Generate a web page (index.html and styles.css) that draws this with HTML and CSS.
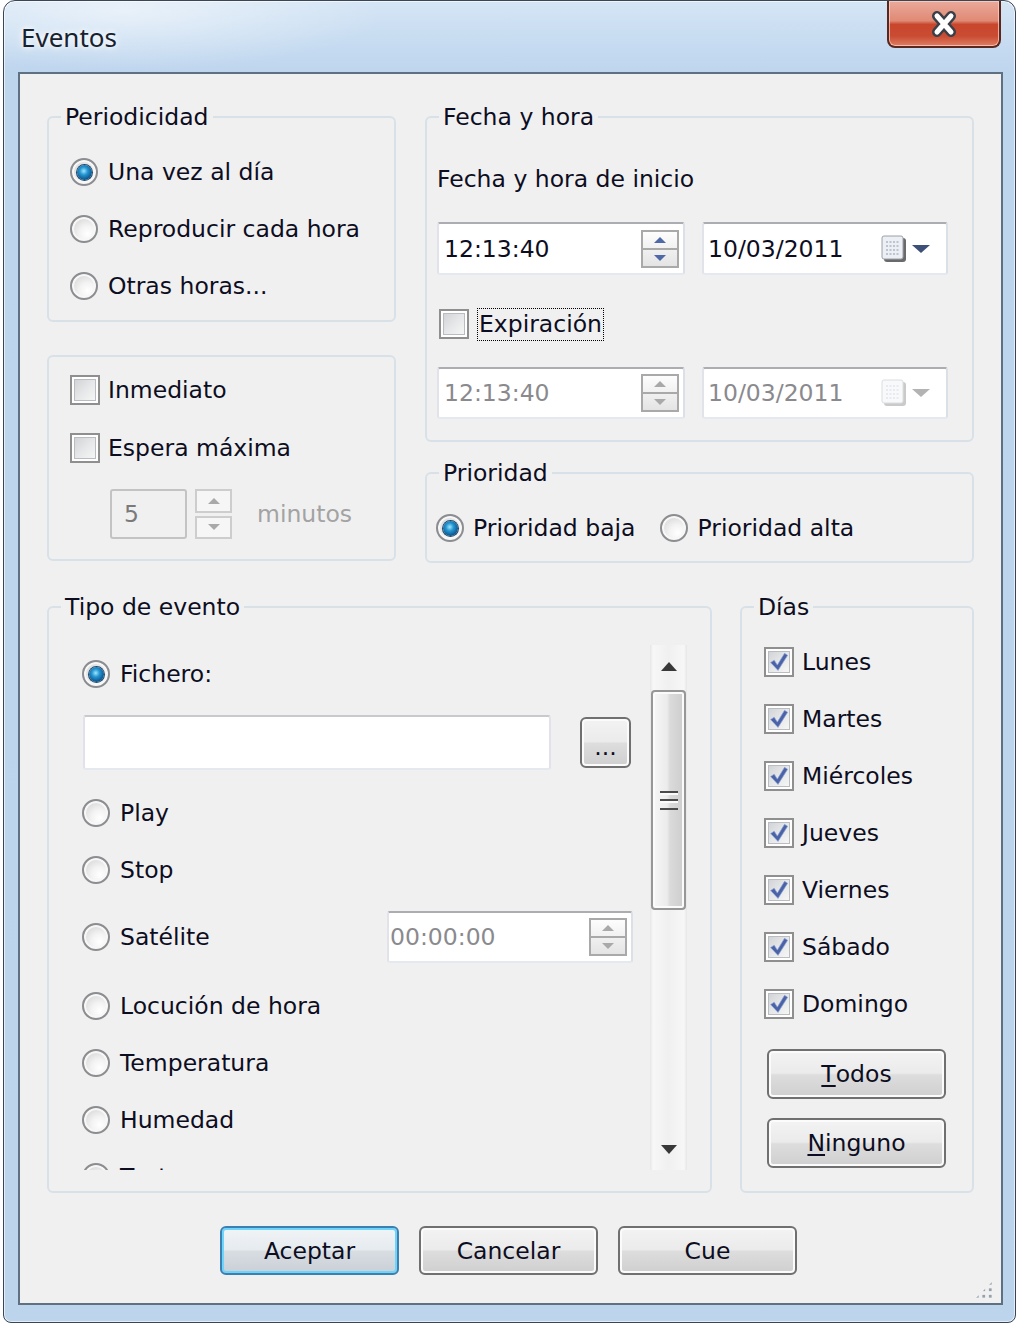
FILE: index.html
```html
<!DOCTYPE html>
<html lang="es">
<head>
  <meta charset="UTF-8">
  <title>Eventos</title>
  <link rel="stylesheet" href="styles.css">
</head>
<body>
  <div class="window">
    <div class="titlebar">
      <span class="title">Eventos</span>
      <span class="close">
        <svg width="36" height="26" viewBox="0 0 36 26">
          <path d="M11 5 L25 21 M25 5 L11 21" stroke="#3a3f48" stroke-width="10" stroke-linecap="round"/>
          <path d="M11 5 L25 21 M25 5 L11 21" stroke="#fff" stroke-width="5" stroke-linecap="round"/>
        </svg>
      </span>
    </div>

    <div class="client">
      <div class="top">
        <!-- columna izquierda -->
        <div class="col">
          <fieldset class="group g-period">
            <legend>Periodicidad</legend>
            <div class="stack">
              <label class="opt"><span class="radio on"></span>Una vez al día</label>
              <label class="opt"><span class="radio"></span>Reproducir cada hora</label>
              <label class="opt"><span class="radio"></span>Otras horas...</label>
            </div>
          </fieldset>

          <div class="group g-wait">
            <label class="opt chk"><span class="check"></span>Inmediato</label>
            <label class="opt chk wait2"><span class="check"></span>Espera máxima</label>
            <div class="wait-row">
              <span class="num">5</span>
              <span class="spin2"><i class="up"></i><i class="dn"></i></span>
              <span class="unit">minutos</span>
            </div>
          </div>
        </div>

        <!-- columna derecha -->
        <div class="col">
          <fieldset class="group g-date">
            <legend>Fecha y hora</legend>
            <div class="sub">Fecha y hora de inicio</div>
            <div class="fields">
              <div class="field time">
                <span class="val">12:13:40</span>
                <span class="spin"><i class="up"></i><i class="dn"></i></span>
              </div>
              <div class="field date">
                <span class="val">10/03/2011</span>
                <svg class="cal" width="26" height="28" viewBox="0 0 26 28">
                  <rect x="3" y="3" width="22" height="24" rx="3" fill="#6a6a6a"/>
                  <rect x="1" y="1" width="21" height="23" rx="2" fill="#eceff3" stroke="#9aa0a8"/>
                  <path d="M5 7h13M5 11h13M5 15h13M5 19h13" stroke="#bcc4cf" stroke-width="2" stroke-dasharray="2 1.5"/>
                </svg>
                <span class="drop"></span>
              </div>
            </div>
            <label class="opt chk expira"><span class="check"></span><span class="focus">Expiración</span></label>
            <div class="fields dis">
              <div class="field time">
                <span class="val">12:13:40</span>
                <span class="spin"><i class="up"></i><i class="dn"></i></span>
              </div>
              <div class="field date">
                <span class="val">10/03/2011</span>
                <svg class="cal" width="26" height="28" viewBox="0 0 26 28">
                  <rect x="3" y="3" width="22" height="24" rx="3" fill="#6a6a6a"/>
                  <rect x="1" y="1" width="21" height="23" rx="2" fill="#eceff3" stroke="#9aa0a8"/>
                  <path d="M5 7h13M5 11h13M5 15h13M5 19h13" stroke="#bcc4cf" stroke-width="2" stroke-dasharray="2 1.5"/>
                </svg>
                <span class="drop"></span>
              </div>
            </div>
          </fieldset>

          <fieldset class="group g-prio">
            <legend>Prioridad</legend>
            <div class="prio-row">
              <label class="opt"><span class="radio on"></span>Prioridad baja</label>
              <label class="opt"><span class="radio"></span>Prioridad alta</label>
            </div>
          </fieldset>
        </div>
      </div>

      <div class="bottom">
        <fieldset class="group g-type">
          <legend>Tipo de evento</legend>
          <div class="type-body">
            <div class="list">
              <label class="opt"><span class="radio on"></span>Fichero:</label>
              <div class="file-row">
                <span class="input"></span>
                <span class="btn dots">...</span>
              </div>
              <label class="opt"><span class="radio"></span>Play</label>
              <label class="opt"><span class="radio"></span>Stop</label>
              <div class="sat-row">
                <label class="opt"><span class="radio"></span>Satélite</label>
                <div class="field sat dis">
                  <span class="val">00:00:00</span>
                  <span class="spin"><i class="up"></i><i class="dn"></i></span>
                </div>
              </div>
              <label class="opt"><span class="radio"></span>Locución de hora</label>
              <label class="opt"><span class="radio"></span>Temperatura</label>
              <label class="opt"><span class="radio"></span>Humedad</label>
              <label class="opt"><span class="radio"></span>Texto a voz</label>
            </div>
            <div class="vscroll">
              <span class="sb-arrow up"></span>
              <span class="thumb"><i></i></span>
              <span class="track"></span>
              <span class="sb-arrow dn"></span>
            </div>
          </div>
        </fieldset>

        <fieldset class="group g-days">
          <legend>Días</legend>
          <div class="days">
            <label class="opt chk"><span class="check on"><svg viewBox="0 0 20 20"><path d="M3 10.5 L6 8.5 L8.6 12.6 L14.6 2.8 L17.2 4.4 L9.2 17 Z"/></svg></span>Lunes</label>
            <label class="opt chk"><span class="check on"><svg viewBox="0 0 20 20"><path d="M3 10.5 L6 8.5 L8.6 12.6 L14.6 2.8 L17.2 4.4 L9.2 17 Z"/></svg></span>Martes</label>
            <label class="opt chk"><span class="check on"><svg viewBox="0 0 20 20"><path d="M3 10.5 L6 8.5 L8.6 12.6 L14.6 2.8 L17.2 4.4 L9.2 17 Z"/></svg></span>Miércoles</label>
            <label class="opt chk"><span class="check on"><svg viewBox="0 0 20 20"><path d="M3 10.5 L6 8.5 L8.6 12.6 L14.6 2.8 L17.2 4.4 L9.2 17 Z"/></svg></span>Jueves</label>
            <label class="opt chk"><span class="check on"><svg viewBox="0 0 20 20"><path d="M3 10.5 L6 8.5 L8.6 12.6 L14.6 2.8 L17.2 4.4 L9.2 17 Z"/></svg></span>Viernes</label>
            <label class="opt chk"><span class="check on"><svg viewBox="0 0 20 20"><path d="M3 10.5 L6 8.5 L8.6 12.6 L14.6 2.8 L17.2 4.4 L9.2 17 Z"/></svg></span>Sábado</label>
            <label class="opt chk"><span class="check on"><svg viewBox="0 0 20 20"><path d="M3 10.5 L6 8.5 L8.6 12.6 L14.6 2.8 L17.2 4.4 L9.2 17 Z"/></svg></span>Domingo</label>
          </div>
          <span class="btn day-btn first"><u>T</u>odos</span>
          <span class="btn day-btn"><u>N</u>inguno</span>
        </fieldset>
      </div>

      <div class="actions">
        <span class="btn main default">Aceptar</span>
        <span class="btn main">Cancelar</span>
        <span class="btn main">Cue</span>
      </div>

      <span class="grip"></span>
    </div>
  </div>
</body>
</html>
```

FILE: styles.css
```css
*{
  margin: 0;
  padding: 0;
  box-sizing: border-box;
}
body{
  background: #fff;
  font-family: "DejaVu Sans", sans-serif;
  font-size: 23.5px;
  color: #0d0d22;
}

/* ventana */
.window{
  width: 1013px;
  margin-left: 3px;
  padding: 0 12px 17px 14px;
  border: 1px solid #3a4656;
  border-radius: 12px 12px 8px 8px;
  background:
    radial-gradient(ellipse 260px 60px at 120px 10px, rgba(255,255,255,.5), transparent),
    linear-gradient(180deg, #d5e5f5 0, #c7dcf1 40px, #bed5ee 72px, #bdd4ed 100%);
  box-shadow: inset 0 0 0 1px rgba(255,255,255,.6);
}
.titlebar{
  height: 71px;
  display: flex;
  justify-content: space-between;
  align-items: flex-start;
}
.title{
  margin: 21px 0 0 3px;
  font-family: "Noto Sans", sans-serif;
  font-size: 26px;
  line-height: 30px;
  color: #18222f;
  text-shadow: 0 0 10px #fff, 0 0 5px #fff;
}
.close{
  width: 114px;
  height: 47px;
  margin-right: 2px;
  display: flex;
  align-items: center;
  justify-content: center;
  border: 2px solid #5a271f;
  border-top: 0;
  border-radius: 0 0 8px 8px;
  background: linear-gradient(#eba99a 0%, #df8a75 44%, #c8462c 52%, #c94c32 78%, #de7d63 100%);
  box-shadow: inset 0 0 0 1px rgba(255,215,205,.7);
}

.client{
  position: relative;
  background: #f0f0f0;
  border: 2px solid #607083;
  padding: 30px 27px 28px;
}

/* rejilla principal */
.top{
  display: grid;
  grid-template-columns: 349px 1fr;
  column-gap: 29px;
  align-items: start;
}
.col{
  display: flex;
  flex-direction: column;
}
.bottom{
  display: grid;
  grid-template-columns: 665px 1fr;
  column-gap: 28px;
  margin-top: 31px;
}

/* group box */
.group{
  min-width: 0;
  border: 2px solid #d8e1e7;
  border-radius: 6px;
}
legend{
  margin-left: 12px;
  padding: 0 4px;
  line-height: 26px;
}
.stack{
  display: flex;
  flex-direction: column;
  gap: 29px;
}
.opt{
  display: flex;
  align-items: center;
  gap: 10px;
  height: 28px;
  white-space: nowrap;
}
.opt.chk{
  height: 30px;
  gap: 8px;
}

/* radio / check */
.radio{
  flex: none;
  width: 28px;
  height: 28px;
  border-radius: 50%;
  border: 2px solid #8b8d90;
  background: radial-gradient(circle at 65% 70%, #fff 0, #f3f3f3 35%, #d4d4d4 85%);
  box-shadow: inset 0 0 0 2px #f7f7f7;
  display: flex;
  align-items: center;
  justify-content: center;
}
.radio.on::after{
  content: "";
  width: 15px;
  height: 15px;
  border-radius: 50%;
  background: radial-gradient(circle at 45% 40%, #9fe6fb 0, #2596d2 32%, #0c558c 70%, #0a365f 100%);
  box-shadow: 0 0 0 1px #23466a;
}
.check{
  flex: none;
  width: 30px;
  height: 30px;
  border: 2px solid #8f8f8f;
  background: linear-gradient(135deg, #cbced2 0%, #e6e7e8 50%, #fafafa 100%);
  box-shadow: inset 0 0 0 2px #fff, inset 0 0 0 3px #b9bdc2;
  display: flex;
  align-items: center;
  justify-content: center;
}
.check svg{
  width: 24px;
  height: 24px;
}
.check svg path{
  fill: #4a62a6;
  stroke: #8fa3d6;
  stroke-width: .6;
}

/* Periodicidad */
.g-period{
  padding: 28px 0 20px 21px;
}
.g-period legend{
  margin-left: -9px;
}

/* espera */
.g-wait{
  margin-top: 33px;
  padding: 18px 0 20px 21px;
}
.wait2{
  margin-top: 28px;
}
.wait-row{
  display: flex;
  align-items: center;
  height: 50px;
  margin: 26px 0 0 40px;
}
.num{
  width: 77px;
  height: 50px;
  padding-left: 12px;
  line-height: 46px;
  color: #7a7a7a;
  border: 2px solid #c3c3c3;
  border-radius: 3px;
}
.spin2{
  width: 37px;
  height: 50px;
  margin-left: 8px;
  display: flex;
  flex-direction: column;
  gap: 3px;
}
.spin2 i{
  flex: 1;
  border: 2px solid #cdcdcd;
  background: #f6f6f6;
}
.unit{
  margin-left: 25px;
  color: #a3a3a3;
}

/* spin buttons */
.spin{
  flex: none;
  width: 38px;
  height: 38px;
  display: flex;
  flex-direction: column;
  border: 2px solid #a9a9a9;
  background: linear-gradient(#fdfdfd, #e4e4e4);
}
.spin i + i{
  border-top: 2px solid #a9a9a9;
}
.spin i, .spin2 i{
  flex: 1;
  display: flex;
  align-items: center;
  justify-content: center;
}
.spin i::before, .spin2 i::before{
  content: "";
  border-left: 6px solid transparent;
  border-right: 6px solid transparent;
  border-bottom: 6px solid #4e68a8;
}
.spin .dn::before, .spin2 .dn::before{
  border-bottom: 0;
  border-top: 6px solid #4e68a8;
}
.spin2 i::before{
  border-bottom-color: #a9a9a9;
}
.spin2 .dn::before{
  border-top-color: #a9a9a9;
}
.dis .spin i::before{
  border-bottom-color: #a9a9a9;
}
.dis .spin .dn::before{
  border-top-color: #a9a9a9;
}

/* fecha y hora */
.g-date{
  padding: 36px 0 21px 10px;
}
.g-date legend{
  margin-left: 2px;
}
.sub{
  line-height: 26px;
}
.fields{
  display: flex;
  gap: 17px;
  margin-top: 30px;
}
.fields.dis{
  margin-top: 28px;
}
.field{
  display: flex;
  align-items: center;
  height: 53px;
  background: #fff;
  border: 2px solid;
  border-color: #abadb3 #dbdfe6 #e3e9ef #e2e3ea;
  border-radius: 3px;
}
.dis .field, .field.dis{
  height: 52px;
}
.field .val{
  flex: 1;
}
.dis .val{
  color: #8a8a8e;
}
.field.time{
  width: 248px;
  padding: 0 4px 0 5px;
}
.field.date{
  width: 246px;
  padding: 0 16px 0 4px;
}
.cal{
  margin-right: 5px;
}
.drop{
  border-left: 9px solid transparent;
  border-right: 9px solid transparent;
  border-top: 8px solid #3d5077;
}
.dis .cal{
  opacity: .35;
}
.dis .drop{
  border-top-color: #b3b3b3;
}
.expira{
  margin: 34px 0 0 2px;
  gap: 5px;
}
.focus{
  border: 1px dotted #000;
  padding: 0 1px;
  line-height: 31px;
}

/* prioridad */
.g-prio{
  margin-top: 18px;
  padding: 28px 0 19px 9px;
}
.g-prio legend{
  margin-left: 3px;
}
.prio-row{
  display: flex;
  gap: 25px;
}
.prio-row .opt{
  gap: 9px;
}

/* tipo de evento */
.g-type{
  padding: 25px 23px 21px 0;
}
.type-body{
  display: flex;
  height: 525px;
}
.list{
  flex: 1;
  overflow: hidden;
  display: flex;
  flex-direction: column;
  gap: 29px;
  padding: 15px 0 0 33px;
}
.list .opt{
  flex: none;
}
.file-row{
  flex: none;
  display: flex;
  align-items: center;
  gap: 29px;
  margin: -2px 0 0 1px;
}
.input{
  width: 468px;
  height: 55px;
  background: #fff;
  border: 2px solid;
  border-color: #c7c9cf #e2e3ea #e3e9ef #e2e3ea;
  border-radius: 3px;
}
.sat-row{
  flex: none;
  display: flex;
  align-items: center;
  justify-content: space-between;
  padding-right: 17px;
  margin-top: -2px;
}
.field.sat{
  width: 246px;
  padding: 0 4px 0 1px;
}

/* barra de desplazamiento */
.vscroll{
  flex: none;
  width: 37px;
  display: flex;
  flex-direction: column;
  background: linear-gradient(90deg, #e6e6e6 0, #f7f7f7 3px, #f0f0f0 50%, #f7f7f7 calc(100% - 3px), #e6e6e6 100%);
}
.sb-arrow{
  height: 43px;
  display: flex;
  align-items: center;
  justify-content: center;
}
.sb-arrow.dn{
  height: 42px;
}
.sb-arrow::before{
  content: "";
  border-left: 8px solid transparent;
  border-right: 8px solid transparent;
  border-bottom: 9px solid #383838;
}
.sb-arrow.dn::before{
  border-bottom: 0;
  border-top: 9px solid #383838;
}
.thumb{
  height: 220px;
  margin: 2px 1px 0;
  border: 2px solid #979797;
  border-radius: 4px;
  background: linear-gradient(90deg, #f6f6f6 0%, #ececec 45%, #dadada 55%, #cdcdcd 100%);
  box-shadow: inset 0 0 0 2px #fbfbfb;
  display: flex;
  align-items: center;
  justify-content: center;
}
.thumb i{
  width: 18px;
  height: 19px;
  background: repeating-linear-gradient(#4a4a4a 0 2px, #fafafa 2px 4px, transparent 4px 8.5px);
}
.track{
  flex: 1;
}

/* días */
.g-days{
  padding: 27px 0 23px 22px;
}
.g-days legend{
  margin-left: -10px;
}
.days{
  display: flex;
  flex-direction: column;
  gap: 27px;
}

/* botones */
.btn{
  display: flex;
  align-items: center;
  justify-content: center;
  border: 2px solid #707070;
  border-radius: 6px;
  background: linear-gradient(#f3f3f3 0%, #ebebeb 48%, #dddddd 52%, #cfcfcf 100%);
  box-shadow: inset 0 0 0 2px #fbfbfb;
  color: #0d0d22;
}
.btn u{
  text-decoration-thickness: 2px;
  text-underline-offset: 3px;
}
.dots{
  width: 51px;
  height: 51px;
  padding-top: 8px;
}
.day-btn{
  width: 179px;
  height: 50px;
  margin: 19px 0 0 3px;
}
.day-btn.first{
  margin-top: 30px;
}
.actions{
  display: flex;
  justify-content: center;
  gap: 20px;
  margin: 33px 0 0 -4px;
}
.btn.main{
  width: 179px;
  height: 49px;
}
.btn.default{
  border-color: #3c7fb1;
  background: linear-gradient(#f0f4f7 0%, #e6ebef 48%, #d8dde2 52%, #c9d0d6 100%);
  box-shadow: inset 0 0 0 2px #6fd4fa;
}

/* agarre de redimensionado */
.grip{
  position: absolute;
  right: 7px;
  bottom: 3px;
  width: 20px;
  height: 20px;
  background: radial-gradient(circle, #95a0ab 1.3px, transparent 1.8px) 0 0 / 6.5px 6.5px;
  clip-path: polygon(100% 0, 100% 100%, 0 100%);
}
```
